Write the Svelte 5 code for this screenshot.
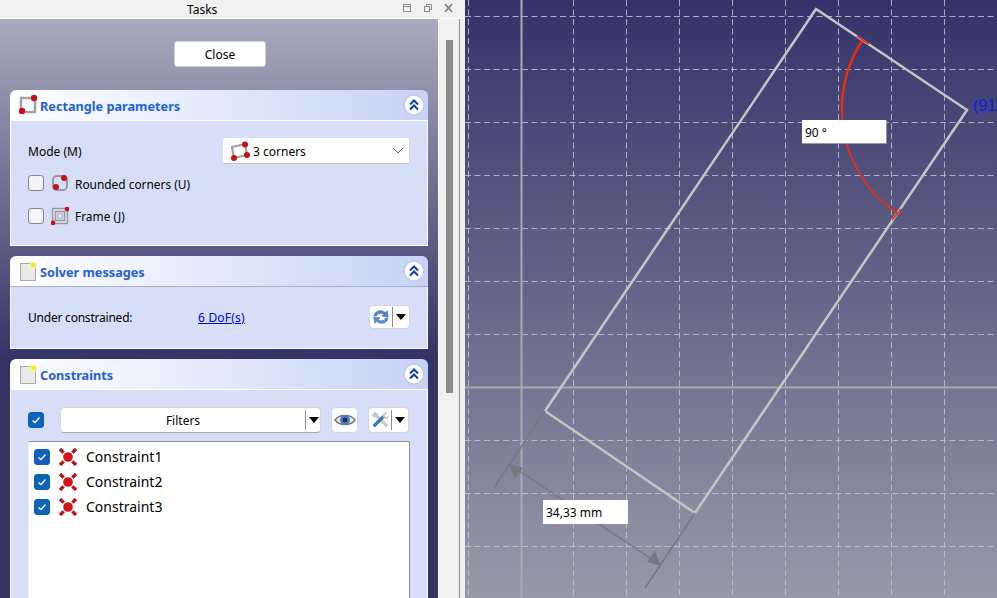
<script>
  const constraints = ['Constraint1', 'Constraint2', 'Constraint3'];
  const gridX = [468, 573, 626, 679, 732, 785, 838, 891, 944];
  const gridY = [16, 69, 122, 175, 228, 281, 334, 440, 493, 546];
</script>

{#snippet collapse()}
  <svg class="collapse" width="24" height="24" viewBox="0 0 24 24" aria-hidden="true">
    <circle cx="12" cy="12" r="10" fill="#fff" stroke="#c3cbe6" stroke-width="1.6" />
    <path d="M8 11.5 12 7.5 16 11.5M8 16.5 12 12.5 16 16.5" fill="none" stroke="#0a3fa8" stroke-width="2" />
  </svg>
{/snippet}

{#snippet note()}
  <svg class="hicon" width="20" height="22" viewBox="0 0 20 22" aria-hidden="true">
    <rect x="1.5" y="3.5" width="15" height="17" fill="#e9e9e9" stroke="#aaa" />
    <circle cx="14" cy="5" r="4" fill="#fff59a" opacity=".7" />
    <circle cx="14" cy="5" r="2.2" fill="#f4ea1c" />
  </svg>
{/snippet}

{#snippet tick()}
  <span class="check on">
    <svg width="10" height="10" viewBox="0 0 10 10" aria-hidden="true"><path d="M1.5 5.5 4 7.5 8.5 2.5" fill="none" stroke="#fff" stroke-width="1.3" /></svg>
  </span>
{/snippet}

{#snippet arrow()}
  <svg class="arrow" width="10" height="6" viewBox="0 0 10 6" aria-hidden="true"><path d="M0 0h10L5 6z" fill="#000" /></svg>
{/snippet}

<div class="app">
  <div class="left">
    <div class="title">
      <span class="title-text">Tasks</span>
      <svg class="dock-icons" width="58" height="18" viewBox="0 0 58 18" aria-hidden="true">
        <g fill="none" stroke="#8a8a8a">
          <rect x="1.5" y="4.5" width="7" height="7" />
          <path d="M1.5 6.5h7" />
          <rect x="22.5" y="6.5" width="5" height="5" />
          <path d="M24.5 6.5v-2h5v5h-2" />
        </g>
        <path d="M43 4l7 8M50 4l-7 8" stroke="#777" stroke-width="1.6" fill="none" />
      </svg>
    </div>
    <div class="dock">
      <div class="tasks">
        <div class="close-row"><button class="close">Close</button></div>

        <section class="box">
          <header>
            <svg class="hicon" width="20" height="22" viewBox="0 0 20 22" aria-hidden="true">
              <rect x="2" y="4" width="14" height="14" fill="#fff" fill-opacity=".5" stroke="#a2a2a2" stroke-width="2.4" />
              <circle cx="15" cy="4" r="3.2" fill="#c8101a" />
              <circle cx="3" cy="17" r="3.2" fill="#c8101a" />
            </svg>
            <h2>Rectangle parameters</h2>
            {@render collapse()}
          </header>
          <div class="content params">
            <div class="mode">
              <span>Mode (M)</span>
              <div class="combo">
                <svg width="22" height="22" viewBox="0 0 22 22" aria-hidden="true">
                  <path d="M4 7 17 4 19 15 6 18z" fill="none" stroke="#a2a2a2" stroke-width="2.2" />
                  <circle cx="17" cy="4.5" r="3" fill="#c8101a" />
                  <circle cx="19" cy="15" r="3" fill="#c8101a" />
                  <circle cx="6" cy="18" r="3" fill="#c8101a" />
                </svg>
                <span class="combo-text lift">3 corners</span>
                <svg class="chev" width="12" height="7" viewBox="0 0 12 7" aria-hidden="true"><path d="M1 1l5 5 5-5" fill="none" stroke="#666" /></svg>
              </div>
            </div>
            <label class="opt">
              <span class="check"></span>
              <svg width="18" height="18" viewBox="0 0 18 18" aria-hidden="true">
                <rect x="2" y="2" width="14" height="14" rx="4" fill="none" stroke="#999" stroke-width="2" />
                <circle cx="13" cy="4" r="3" fill="#c8101a" />
                <circle cx="5" cy="13" r="3" fill="#c8101a" />
              </svg>
              <span class="lift opt-text">Rounded corners (U)</span>
            </label>
            <label class="opt">
              <span class="check"></span>
              <svg width="18" height="18" viewBox="0 0 18 18" aria-hidden="true">
                <rect x="1.5" y="1.5" width="15" height="15" fill="none" stroke="#999" stroke-width="1.4" />
                <rect x="4.5" y="4.5" width="9" height="9" fill="none" stroke="#999" stroke-width="1.4" />
                <rect x="7" y="7" width="4" height="4" fill="#eef0f8" stroke="#aaa" />
                <circle cx="16" cy="2" r="2.4" fill="#c8101a" />
                <circle cx="2" cy="16" r="2.4" fill="#c8101a" />
              </svg>
              <span class="opt-text">Frame (J)</span>
            </label>
          </div>
        </section>

        <section class="box">
          <header class="grayline">
            {@render note()}
            <h2>Solver messages</h2>
            {@render collapse()}
          </header>
          <div class="content solver">
            <span class="under">Under constrained:</span>
            <a href="#dof" class="dof">6 DoF(s)</a>
            <div class="tool split short">
              <svg width="22" height="22" viewBox="0 0 20 20" aria-hidden="true">
                <path d="M2 9C3 3 10 1 15 5l2-2 1 7-7-1 2-2C10 5 6 6 5 9z" fill="#4a86c6" stroke="#2f5f9a" stroke-width=".5" />
                <path d="M18 11c-1 6-8 8-13 4l-2 2-1-7 7 1-2 2c3 2 7 1 8-2z" fill="#5a94d2" stroke="#2f5f9a" stroke-width=".5" />
              </svg>
              <i></i>
              {@render arrow()}
            </div>
          </div>
        </section>

        <section class="box grow">
          <header>
            {@render note()}
            <h2>Constraints</h2>
            {@render collapse()}
          </header>
          <div class="content cons">
            <div class="filter-row">
              {@render tick()}
              <div class="filters">
                <span class="filters-text">Filters</span>
                <i></i>
                {@render arrow()}
              </div>
              <div class="tool eye">
                <svg width="22" height="16" viewBox="0 0 22 16" aria-hidden="true">
                  <path d="M1 8C5 2 17 2 21 8 17 14 5 14 1 8z" fill="#e8e8e8" stroke="#777" stroke-width="1.4" />
                  <circle cx="11" cy="8" r="5" fill="#4a7fc0" />
                  <circle cx="11" cy="8" r="2.4" fill="#1d2f50" />
                </svg>
              </div>
              <div class="tool split">
                <svg width="22" height="22" viewBox="0 0 20 20" aria-hidden="true">
                  <path d="M3 2 18 17" stroke="#c9c9c9" stroke-width="3.6" />
                  <path d="M1 5l4-4 3 3-4 4z" fill="#c9c9c9" />
                  <path d="M3 17 14 6" stroke="#3a78be" stroke-width="3.8" />
                  <path d="M13 5c0-3 3-4 5-3l-3 3 2 2 3-2c0 3-3 5-6 3z" fill="#c4c4c4" />
                </svg>
                <i></i>
                {@render arrow()}
              </div>
            </div>
            <div class="list">
              {#each constraints as c}
                <div class="row">
                  {@render tick()}
                  <svg class="x" width="18" height="18" viewBox="0 0 18 18" aria-hidden="true">
                    <path d="M1 1 4.6 4.6M17 1l-3.6 3.6M1 17l3.6-3.6M17 17l-3.6-3.6" stroke="#b3161c" stroke-width="3.4" />
                    <circle cx="9" cy="9" r="4.8" fill="#d8121a" />
                  </svg>
                  <span>{c}</span>
                </div>
              {/each}
            </div>
          </div>
        </section>
      </div>
      <div class="scroll"><div class="thumb"></div></div>
    </div>
  </div>

  <div class="view">
    <svg width="532" height="598" viewBox="465 0 532 598" aria-hidden="true">
      <g stroke="#c4c4cc" stroke-opacity=".85" stroke-dasharray="6 3.5">
        {#each gridX as x}<line x1={x + 0.5} y1="0" x2={x + 0.5} y2="598" />{/each}
        {#each gridY as y}<line x1="465" y1={y + 0.5} x2="997" y2={y + 0.5} />{/each}
      </g>
      <line x1="521.5" y1="0" x2="521.5" y2="598" stroke="#aaaab0" stroke-width="2" />
      <line x1="465" y1="387.5" x2="997" y2="387.5" stroke="#aaaab0" stroke-width="2" />
      <path d="M816 9 967 110 695 513 545 411Z" fill="none" stroke="#c6c6c6" stroke-width="2.5" />
      <path d="M862 41A125 125 0 0 0 842 110" fill="none" stroke="#f22a10" stroke-width="2.4" />
      <path d="M842 110A125 125 0 0 0 897 213" fill="none" stroke="#f22a10" stroke-width="1.7" />
      <path d="M857 36 869 44M901 209 892 220" stroke="#f22a10" stroke-width="1.6" />
      <g stroke="#77777f" stroke-width="1.4" fill="none">
        <path d="M545 411 494 488M695 513 645 588M512 466 656 562" />
      </g>
      <path d="M509 464 523 468 515 478z" fill="#77777f" />
      <path d="M661 566 647 562 655 551z" fill="#77777f" />
      <text x="973" y="111" class="coord">(91</text>
    </svg>
    <div class="field angle">90 °</div>
    <div class="field length">34,33 mm</div>
  </div>
</div>

<style>
  :global(body) {
    margin: 0;
  }
  .app {
    display: flex;
    width: 997px;
    height: 598px;
    overflow: hidden;
    font-family: "Noto Sans", "Open Sans", sans-serif;
    font-size: 12px;
    color: #000;
  }
  .lift {
    position: relative;
    top: 1px;
  }
  .left {
    width: 465px;
    flex: none;
    display: flex;
    flex-direction: column;
    background: #f0f0f0;
  }
  .title {
    height: 18px;
    flex: none;
    border-bottom: 1px solid #fff;
    position: relative;
    display: flex;
    align-items: center;
    justify-content: flex-end;
    padding-right: 5px;
  }
  .title-text {
    position: absolute;
    left: 187px;
    top: 1px;
    line-height: 18px;
  }
  .dock {
    flex: 1;
    min-height: 0;
    display: flex;
  }
  .tasks {
    width: 418px;
    flex: none;
    padding: 22px 10px 0;
    display: flex;
    flex-direction: column;
    background: linear-gradient(180deg, #aaaabf 0, #333366 341px);
    overflow: hidden;
  }
  .close-row {
    display: flex;
    justify-content: center;
    margin-bottom: 23px;
    padding-left: 2px;
  }
  .close {
    width: 92px;
    height: 26px;
    padding: 0;
    font: inherit;
    background: #fff;
    border: 1px solid #cfcfd8;
    border-radius: 3px;
  }
  .box {
    flex: none;
    margin-bottom: 10px;
    display: flex;
    flex-direction: column;
  }
  .box.grow {
    flex: 1;
    min-height: 0;
    margin-bottom: 0;
  }
  header {
    height: 30px;
    flex: none;
    display: flex;
    align-items: center;
    padding: 0 2px 0 9px;
    border-radius: 6px 6px 0 0;
    border-bottom: 1px solid #fff;
    background: linear-gradient(90deg, #fff 0, #c6d3f7 100%);
  }
  header.grayline {
    border-bottom-color: #a9aec4;
  }
  .hicon {
    flex: none;
    margin-right: 1px;
  }
  h2 {
    flex: 1;
    margin: 0;
    padding-top: 1px;
    font-size: 12.7px;
    font-weight: 700;
    color: #2360d8;
  }
  .content {
    background: #d6dff7;
    border: solid #fff;
    border-width: 0 1px 1px;
    padding: 17px 17px 0;
  }
  .params {
    height: 107px;
    display: flex;
    flex-direction: column;
  }
  .mode {
    display: flex;
    align-items: center;
    justify-content: space-between;
    height: 26px;
    margin-bottom: 11px;
  }
  .combo {
    width: 187px;
    height: 26px;
    box-sizing: border-box;
    display: flex;
    align-items: center;
    gap: 3px;
    padding: 0 5px;
    background: #fff;
    border-bottom: 1px solid #c0c0c8;
    border-right: 1px solid #d8d8e0;
    border-radius: 2px;
  }
  .combo-text {
    flex: 1;
  }
  .opt {
    display: flex;
    align-items: center;
    height: 16px;
    gap: 7px;
    margin-bottom: 17px;
  }
  .opt svg {
    flex: none;
  }
  .opt-text {
    margin-left: -1px;
    font-size: 11.9px;
  }
  .check {
    width: 16px;
    height: 16px;
    box-sizing: border-box;
    flex: none;
    display: flex;
    align-items: center;
    justify-content: center;
    border: 1px solid #858585;
    border-radius: 3px;
    background: #f4f5fa;
  }
  .check.on {
    background: #0f62b8;
    border-color: #0f62b8;
  }
  .solver {
    height: 24px;
    display: flex;
    align-items: center;
    padding-bottom: 19px;
    padding-top: 18px;
  }
  .under {
    width: 170px;
    letter-spacing: -0.22px;
  }
  .dof {
    flex: 1;
    color: #0000ee;
    letter-spacing: 0.2px;
    text-decoration: underline;
  }
  .tool {
    height: 26px;
    box-sizing: border-box;
    display: flex;
    align-items: center;
    justify-content: center;
    background: #fff;
    border: 1px solid #d0d4e4;
    border-radius: 4px;
  }
  .tool.short {
    height: 24px;
  }
  .split {
    width: 41px;
    gap: 2px;
    padding: 0 3px 0 2px;
  }
  i {
    display: block;
    width: 1px;
    height: 20px;
    background: #8a8a8a;
    flex: none;
  }
  .split i {
    margin-right: 1px;
  }
  .arrow {
    flex: none;
  }
  .cons {
    flex: 1;
    min-height: 0;
    display: flex;
    flex-direction: column;
    border-bottom: 0;
  }
  .filter-row {
    display: flex;
    align-items: center;
    height: 26px;
    flex: none;
    margin-bottom: 8px;
  }
  .filters {
    width: 261px;
    height: 26px;
    box-sizing: border-box;
    margin-left: 16px;
    margin-right: 10px;
    display: flex;
    align-items: center;
    gap: 3px;
    padding-right: 1px;
    background: #fff;
    border: 1px solid #d0d4e4;
    border-bottom-color: #a8a8b4;
    border-radius: 4px;
  }
  .filters-text {
    flex: 1;
    padding-left: 3px;
    text-align: center;
  }
  .eye {
    width: 27px;
    margin-right: 10px;
  }
  .list {
    flex: 1;
    min-height: 0;
    background: #fff;
    border: solid #8f939f;
    border-width: 1px 1px 0 1px;
    border-left-color: #f0f0f0;
    padding: 2px 0 0 5px;
  }
  .row {
    display: flex;
    align-items: center;
    height: 25px;
    font-size: 14px;
  }
  .x {
    margin: 0 9px 0 9px;
    flex: none;
  }
  .scroll {
    flex: 1;
    box-sizing: border-box;
    border-left: 1px solid #fff;
    padding-top: 21px;
    padding-left: 7px;
    background: linear-gradient(90deg, #f0f0f0 0 20px, #8c9099 20px 21px, #f0f0f0 21px);
  }
  .thumb {
    width: 7px;
    height: 353px;
    background: #8a8a8a;
  }
  .view {
    flex: 1;
    position: relative;
    background: linear-gradient(180deg, #33336a 0, #9999aa 100%);
  }
  .view svg {
    display: block;
  }
  .coord {
    fill: #0a1fe0;
    font-family: "Liberation Sans", sans-serif;
    font-size: 16px;
  }
  .field {
    position: absolute;
    box-sizing: border-box;
    width: 85px;
    height: 24px;
    padding: 1px 0 0 3px;
    line-height: 24px;
    background: #fff;
    font-size: 12px;
  }
  .angle {
    left: 337px;
    top: 120px;
    border-right: 1px solid #999;
    border-bottom: 1px solid #999;
  }
  .length {
    left: 78px;
    top: 500px;
  }
</style>
